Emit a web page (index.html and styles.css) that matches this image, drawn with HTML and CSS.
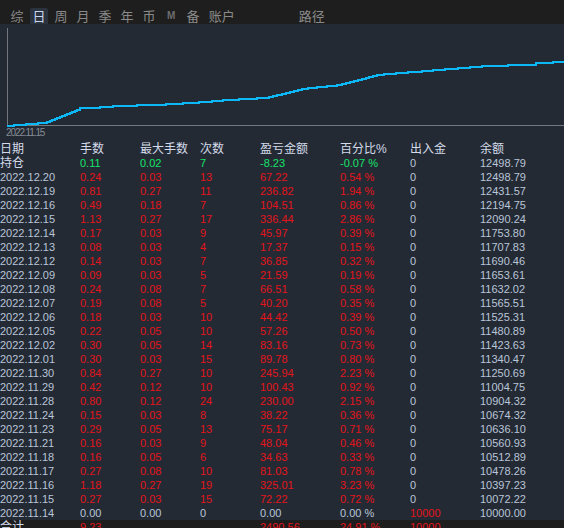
FILE: index.html
```html
<!DOCTYPE html>
<html lang="zh">

<head>
    <meta charset="UTF-8">
    <title>账户日报</title>
    <link rel="stylesheet" href="styles.css">
</head>

<body>
    <!-- 顶部周期切换 -->
    <div class="tabs">
        <span class="tab">综</span>
        <span class="tab active">日</span>
        <span class="tab">周</span>
        <span class="tab">月</span>
        <span class="tab">季</span>
        <span class="tab">年</span>
        <span class="tab">币</span>
        <span class="tab tab-m">M</span>
        <span class="tab">备</span>
        <span class="tab">账户</span>
        <span class="tab tab-path">路径</span>
    </div>

    <!-- 余额曲线 -->
    <div class="chart">
        <svg class="curve" width="564" height="103" viewBox="0 0 564 103">
            <line class="axis" x1="7.5" y1="4" x2="7.5" y2="102"></line>
            <line class="axis" x1="7" y1="101.5" x2="564" y2="101.5"></line>
            <polyline class="line" points="7,101.5 14,101.5 14,100.5 26,100.5 26,99.5 38,99.5 38,98.5 47,98.5
                47,97.5 49.5,97.5 49.5,96.5 52,96.5 52,95.5 54.5,95.5 54.5,94.5 57,94.5 57,93.5 59.5,93.5
                59.5,92.5 62,92.5 62,91.5 64.5,91.5 64.5,90.5 67,90.5 67,89.5 69.5,89.5 69.5,88.5 72,88.5
                72,87.5 74.5,87.5 74.5,86.5 77,86.5 77,85.5 80,85.5 80,84 100,84 100,83 113,83 113,82 137,82
                137,81 166,81 166,80 183,80 183,79 199,79 199,77.5 212,77.5 212,76.5 223,76.5 223,75.5 239,75.5
                239,74.8 257,74.8 257,73.7 269,73.7 269,72.7 273,72.7 273,71.7 277,71.7 277,70.7 282,70.7
                282,69.7 286,69.7 286,68.7 290,68.7 290,67.7 294,67.7 294,66.7 298,66.7 298,65.7 302,65.7
                302,64.7 308,64.7 308,63.7 317,63.7 317,63 327,63 327,62 337,62 337,61 342,61 342,60 346,60
                346,59 350,59 350,58 354,58 354,57 358,57 358,56 362,56 362,55 366,55 366,54 369,54 369,53
                373,53 373,52 377,52 377,50.5 384,50.5 384,49.7 396,49.7 396,48.7 408,48.7 408,47.7 422,47.7
                422,46.7 433,46.7 433,45.7 445,45.7 445,44.8 458,44.8 458,43.7 470,43.7 470,42.7 482,42.7
                482,41.7 508,41.7 508,40.5 536,40.5 536,39.3 553,39.3 553,38.3 564,38.3"></polyline>
        </svg>
        <div class="chart-date">2022.11.15</div>
    </div>

    <!-- 每日明细 -->
    <table class="report">
        <colgroup>
            <col style="width: 80px">
            <col style="width: 60px">
            <col style="width: 60px">
            <col style="width: 60px">
            <col style="width: 80px">
            <col style="width: 70px">
            <col style="width: 70px">
            <col style="width: 84px">
        </colgroup>
        <tr class="head">
            <th>日期</th><th>手数</th><th>最大手数</th><th>次数</th><th>盈亏金额</th><th>百分比%</th><th>出入金</th><th>余额</th>
        </tr>
        <tr class="hold">
            <td class="cn">持仓</td><td>0.11</td><td>0.02</td><td>7</td><td>-8.23</td><td>-0.07 %</td><td>0</td><td>12498.79</td>
        </tr>
        <tr class="day"><td>2022.12.20</td><td>0.24</td><td>0.03</td><td>13</td><td>67.22</td><td>0.54 %</td><td>0</td><td>12498.79</td></tr>
        <tr class="day"><td>2022.12.19</td><td>0.81</td><td>0.27</td><td>11</td><td>236.82</td><td>1.94 %</td><td>0</td><td>12431.57</td></tr>
        <tr class="day"><td>2022.12.16</td><td>0.49</td><td>0.18</td><td>7</td><td>104.51</td><td>0.86 %</td><td>0</td><td>12194.75</td></tr>
        <tr class="day"><td>2022.12.15</td><td>1.13</td><td>0.27</td><td>17</td><td>336.44</td><td>2.86 %</td><td>0</td><td>12090.24</td></tr>
        <tr class="day"><td>2022.12.14</td><td>0.17</td><td>0.03</td><td>9</td><td>45.97</td><td>0.39 %</td><td>0</td><td>11753.80</td></tr>
        <tr class="day"><td>2022.12.13</td><td>0.08</td><td>0.03</td><td>4</td><td>17.37</td><td>0.15 %</td><td>0</td><td>11707.83</td></tr>
        <tr class="day"><td>2022.12.12</td><td>0.14</td><td>0.03</td><td>7</td><td>36.85</td><td>0.32 %</td><td>0</td><td>11690.46</td></tr>
        <tr class="day"><td>2022.12.09</td><td>0.09</td><td>0.03</td><td>5</td><td>21.59</td><td>0.19 %</td><td>0</td><td>11653.61</td></tr>
        <tr class="day"><td>2022.12.08</td><td>0.24</td><td>0.08</td><td>7</td><td>66.51</td><td>0.58 %</td><td>0</td><td>11632.02</td></tr>
        <tr class="day"><td>2022.12.07</td><td>0.19</td><td>0.08</td><td>5</td><td>40.20</td><td>0.35 %</td><td>0</td><td>11565.51</td></tr>
        <tr class="day"><td>2022.12.06</td><td>0.18</td><td>0.03</td><td>10</td><td>44.42</td><td>0.39 %</td><td>0</td><td>11525.31</td></tr>
        <tr class="day"><td>2022.12.05</td><td>0.22</td><td>0.05</td><td>10</td><td>57.26</td><td>0.50 %</td><td>0</td><td>11480.89</td></tr>
        <tr class="day"><td>2022.12.02</td><td>0.30</td><td>0.05</td><td>14</td><td>83.16</td><td>0.73 %</td><td>0</td><td>11423.63</td></tr>
        <tr class="day"><td>2022.12.01</td><td>0.30</td><td>0.03</td><td>15</td><td>89.78</td><td>0.80 %</td><td>0</td><td>11340.47</td></tr>
        <tr class="day"><td>2022.11.30</td><td>0.84</td><td>0.27</td><td>10</td><td>245.94</td><td>2.23 %</td><td>0</td><td>11250.69</td></tr>
        <tr class="day"><td>2022.11.29</td><td>0.42</td><td>0.12</td><td>10</td><td>100.43</td><td>0.92 %</td><td>0</td><td>11004.75</td></tr>
        <tr class="day"><td>2022.11.28</td><td>0.80</td><td>0.12</td><td>24</td><td>230.00</td><td>2.15 %</td><td>0</td><td>10904.32</td></tr>
        <tr class="day"><td>2022.11.24</td><td>0.15</td><td>0.03</td><td>8</td><td>38.22</td><td>0.36 %</td><td>0</td><td>10674.32</td></tr>
        <tr class="day"><td>2022.11.23</td><td>0.29</td><td>0.05</td><td>13</td><td>75.17</td><td>0.71 %</td><td>0</td><td>10636.10</td></tr>
        <tr class="day"><td>2022.11.21</td><td>0.16</td><td>0.03</td><td>9</td><td>48.04</td><td>0.46 %</td><td>0</td><td>10560.93</td></tr>
        <tr class="day"><td>2022.11.18</td><td>0.16</td><td>0.05</td><td>6</td><td>34.63</td><td>0.33 %</td><td>0</td><td>10512.89</td></tr>
        <tr class="day"><td>2022.11.17</td><td>0.27</td><td>0.08</td><td>10</td><td>81.03</td><td>0.78 %</td><td>0</td><td>10478.26</td></tr>
        <tr class="day"><td>2022.11.16</td><td>1.18</td><td>0.27</td><td>19</td><td>325.01</td><td>3.23 %</td><td>0</td><td>10397.23</td></tr>
        <tr class="day"><td>2022.11.15</td><td>0.27</td><td>0.03</td><td>15</td><td>72.22</td><td>0.72 %</td><td>0</td><td>10072.22</td></tr>
        <tr><td>2022.11.14</td><td>0.00</td><td>0.00</td><td>0</td><td>0.00</td><td>0.00 %</td><td class="red">10000</td><td>10000.00</td></tr>
        <tr class="total">
            <td class="cn">合计</td><td class="red">9.23</td><td></td><td></td><td class="red">2490.56</td><td class="red">24.91 %</td><td class="red">10000</td><td></td>
        </tr>
    </table>
</body>

</html>
```

FILE: styles.css
```css
body {
    margin: 0;
    background-color: #242a33;
    font-family: "Liberation Sans", "Noto Sans CJK SC", sans-serif;
    overflow: hidden;
}

.tabs {
    display: flex;
    align-items: flex-end;
    height: 24px;
    padding-left: 8px;
    background-color: #1e1e1e;
}

.tab {
    height: 16px;
    padding: 0 2.5px;
    margin-right: 4px;
    line-height: 16px;
    font-size: 13px;
    font-family: "Noto Sans CJK SC", sans-serif;
    color: #8a8a8a;
}

.tab.active {
    color: #c9d8f0;
    background-color: #2b333e;
    border-radius: 2px 2px 0 0;
}

/* M 是个小号粗体字母 */
.tab-m {
    width: 13px;
    text-align: center;
    font-family: "Liberation Sans", sans-serif;
    font-size: 10px;
    font-weight: bold;
    color: #6e6e6e;
}

.tab-path {
    margin-left: 55px;
}

.chart {
    height: 118px;
}

.curve {
    display: block;
}

.axis {
    stroke: #74787e;
    stroke-width: 1;
}

.line {
    fill: none;
    stroke: #0cb8f6;
    stroke-width: 2;
    shape-rendering: crispEdges;
}

.chart-date {
    height: 15px;
    padding-left: 6px;
    line-height: 11px;
    font-size: 10px;
    letter-spacing: -1.1px;
    color: #858c96;
}

.report {
    width: 564px;
    table-layout: fixed;
    border-collapse: collapse;
    border-spacing: 0;
}

.report th,
.report td {
    height: 14px;
    padding: 0;
    line-height: 14px;
    text-align: left;
    white-space: nowrap;
    overflow: hidden;
    font-size: 11px;
    font-weight: normal;
    color: #b9c5d9;
}

.report th,
.report td.cn {
    font-size: 12px;
    color: #d3dbea;
}

/* 第2到第6列按盈亏着色 */
.report tr.day td:nth-child(n+2):nth-child(-n+6) {
    color: #e3141c;
}

.report tr.hold td:nth-child(n+2):nth-child(-n+6) {
    color: #16e26c;
}

.report td.red {
    color: #e3141c;
}

.report tr.total td {
    background-color: #1e1e1e;
}
```
